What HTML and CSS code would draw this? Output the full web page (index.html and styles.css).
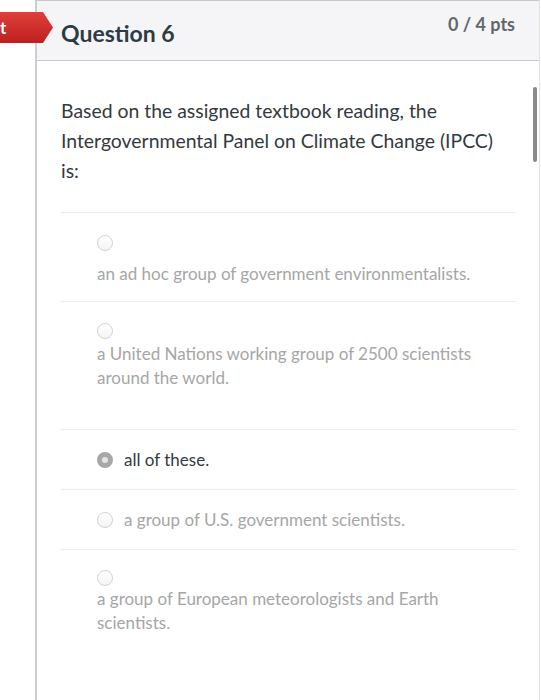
FILE: index.html
```html
<!DOCTYPE html>
<html lang="en">
<head>
<meta charset="utf-8">
<title>Question 6</title>
<link rel="stylesheet" href="styles.css">
</head>
<body>
<div class="page">
  <span class="flag">t</span>
  <div class="gutter"></div>
  <section class="card">
    <header class="card-head">
      <h2 class="title">Question 6</h2>
      <span class="pts">0 / 4 pts</span>
    </header>
    <div class="card-body">
      <p class="prompt">Based on the assigned textbook reading, the Intergovernmental Panel on Climate Change (IPCC) is:</p>
      <div class="answers">
        <div class="answer answer--stack answer--first">
          <span class="radio"></span>
          <span class="answer-text">an ad hoc group of government environmentalists.</span>
        </div>
        <div class="answer answer--stack answer--second">
          <span class="radio"></span>
          <span class="answer-text">a United Nations working group of 2500 scientists around the world.</span>
        </div>
        <div class="answer answer--inline answer--selected">
          <span class="radio radio--checked"></span>
          <span class="answer-text">all of these.</span>
        </div>
        <div class="answer answer--inline">
          <span class="radio"></span>
          <span class="answer-text">a group of U.S. government scientists.</span>
        </div>
        <div class="answer answer--stack answer--last">
          <span class="radio"></span>
          <span class="answer-text">a group of European meteorologists and Earth scientists.</span>
        </div>
      </div>
    </div>
    <div class="scrollbar"></div>
  </section>
</div>
</body>
</html>
```
FILE: styles.css
```css
* { box-sizing: border-box; }

html, body {
  margin: 0;
  padding: 0;
  background: #ffffff;
}

body {
  font-family: Lato, "Open Sans", "Liberation Sans", sans-serif;
  color: #2d3b45;
}

.page {
  position: relative;
  display: flex;
  min-height: 700px;
}

.gutter {
  width: 35px;
  flex: none;
}

.flag {
  position: absolute;
  left: 0;
  top: 12px;
  width: 53px;
  height: 31px;
  background: linear-gradient(#e0403b, #bf1f1d);
  clip-path: polygon(0 0, 43px 0, 53px 50%, 43px 100%, 0 100%);
  color: #ffffff;
  font-weight: 700;
  font-size: 17px;
  line-height: 31px;
  z-index: 2;
}

.card {
  position: relative;
  flex: 1;
  margin-right: 1px;
  border-left: 2px solid #cdcdcd;
  border-right: 1px solid #e2e2e2;
}

.card-head {
  display: flex;
  justify-content: space-between;
  align-items: flex-start;
  height: 61px;
  padding: 0 24px;
  background: #f5f5f7;
  border-top: 1px solid #c9c9cc;
  border-bottom: 1px solid #c9c9cc;
}

.title {
  margin: 18px 0 0;
  font-size: 23px;
  line-height: 28px;
  font-weight: 700;
  color: #2d3b45;
}

.pts {
  margin-top: 12px;
  font-size: 18px;
  line-height: 22px;
  font-weight: 700;
  color: #62676b;
}

.card-body {
  padding: 35px 23px 0 24px;
}

.prompt {
  margin: 0;
  max-width: 445px;
  font-size: 19.4px;
  line-height: 30px;
  color: #333a3f;
}

.answers {
  margin-top: 26px;
}

.answer {
  border-top: 1px solid #ececec;
  padding-left: 36px;
  font-size: 17px;
  line-height: 24px;
  color: #a6a6a6;
}

.answer--stack {
  display: flex;
  flex-direction: column;
  align-items: flex-start;
  padding-top: 21px;
  padding-bottom: 16px;
  gap: 3px;
}

.answer--first {
  padding-top: 22px;
  padding-bottom: 15px;
  gap: 11px;
}

.answer--second {
  padding-bottom: 39px;
}

.answer--last {
  gap: 1px;
  padding-top: 20px;
  padding-bottom: 60px;
}

.answer--inline {
  display: flex;
  align-items: center;
  gap: 11px;
  padding-top: 18px;
  padding-bottom: 17px;
}

.answer--selected {
  color: #333a3f;
}

.answer-text {
  max-width: 392px;
}

.radio {
  width: 16px;
  height: 16px;
  flex: none;
  border-radius: 50%;
  border: 1px solid #d3d3d3;
  background: linear-gradient(#ffffff, #f4f4f4);
}

.radio--checked {
  border: 5px solid #a7a7a7;
  background: #e4e4e4;
}

.scrollbar {
  position: absolute;
  right: 2px;
  top: 87px;
  width: 4px;
  height: 75px;
  border-radius: 2px;
  background: #8a8a8a;
}
```
